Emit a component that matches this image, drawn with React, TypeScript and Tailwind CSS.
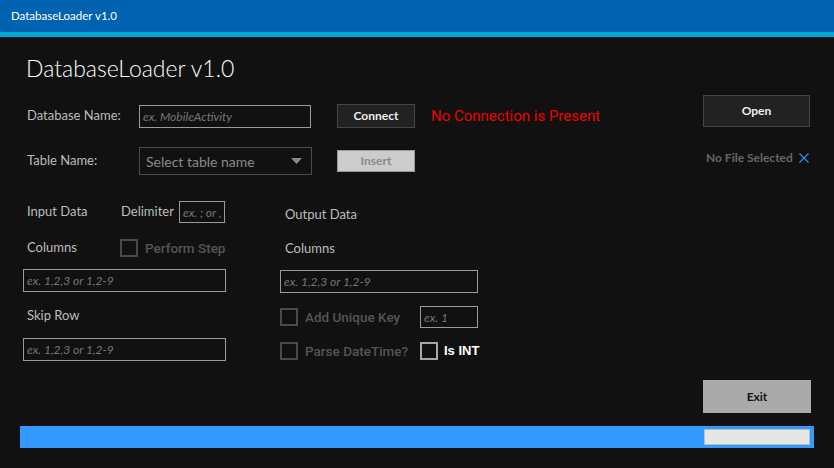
import React from 'react';

// ── Small building blocks ──────────────────────────────────────────────────────

function Box({ light }: { light?: boolean }) {
  return (
    <span
      className={
        light
          ? 'block w-[18px] h-[18px] border-2 border-[#a8a8a8] shrink-0'
          : 'block w-[18px] h-[18px] border-2 border-[#4a4a4a] shrink-0'
      }
    />
  );
}

function Field({ placeholder, className }: { placeholder: string; className: string }) {
  return (
    <input
      readOnly
      placeholder={placeholder}
      className={
        'bg-transparent border border-[#9a9a9a] px-[3px] text-[12px] italic text-[#ddd] outline-none placeholder:text-[#767676] font-[Lato,sans-serif] ' +
        className
      }
    />
  );
}

const label = 'text-[13px] text-[#bdbdbd]';
const check = "text-[13.5px] font-medium text-[#555555] font-['Roboto',sans-serif]";

export default function App() {
  return (
    <div className="w-[834px] h-[468px] bg-[#111111] flex flex-col overflow-hidden font-[Lato,sans-serif]">
      {/* window title */}
      <div className="h-[32px] bg-[#0063b1] flex items-center pl-[11px] text-white text-[11.5px]">
        DatabaseLoader v1.0
      </div>
      <div className="h-[5px] bg-[#00a9d6]" />

      <div className="flex-1 flex flex-col">
        <div className="flex flex-1">
          {/* ── main form ── */}
          <div className="flex-1 flex flex-col">
            <h1 className="ml-[26px] mt-[15px] h-[32px] leading-[32px] text-[23px] font-light text-white">
              DatabaseLoader v1.0
            </h1>

            {/* database row */}
            <div className="flex items-center mt-[20px] h-[24px]">
              <span className={'ml-[27px] w-[112px] ' + label}>Database Name:</span>
              <Field placeholder="ex. MobileActivity" className="w-[172px] h-[23px]" />
              <button className="ml-[26px] w-[78px] h-[24px] bg-[#222222] border border-[#444444] text-[12px] font-bold text-[#eeeeee]">
                Connect
              </button>
              <span className="ml-[16px] text-[15px] text-[#f00000] font-['Roboto',sans-serif]">
                No Connection is Present
              </span>
            </div>

            {/* table row */}
            <div className="flex items-center mt-[19px] h-[28px]">
              <span className={'ml-[27px] w-[112px] ' + label}>Table Name:</span>
              <div className="w-[173px] h-[28px] border border-[#4a4a4a] flex items-center justify-between pl-[6px] pr-[9px]">
                <span className="text-[14px] text-[#8a8a8a]">Select table name</span>
                <svg width="11" height="6" viewBox="0 0 11 6">
                  <path d="M0 0H11L5.5 6Z" fill="#8a8a8a" />
                </svg>
              </div>
              <button className="ml-[25px] w-[78px] h-[22px] bg-[#cccccc] border border-[#9a9a9a] text-[12px] font-bold text-[#8a8a8a]">
                Insert
              </button>
            </div>

            {/* input / output */}
            <div className="flex mt-[26px]">
              <div className="w-[280px] pl-[23px] flex flex-col">
                <div className="flex items-center h-[22px]">
                  <span className={'ml-[4px] w-[94px] ' + label}>Input Data</span>
                  <span className={'w-[58px] ' + label}>Delimiter</span>
                  <Field placeholder="ex. ; or ," className="w-[46px] h-[22px]" />
                </div>
                <div className="flex items-center h-[18px] mt-[16px]">
                  <span className={'ml-[4px] w-[93px] ' + label}>Columns</span>
                  <Box />
                  <span className={'ml-[7px] ' + check}>Perform Step</span>
                </div>
                <Field placeholder="ex. 1,2,3 or 1,2-9" className="mt-[12px] w-[203px] h-[23px]" />
                <div className="flex items-center h-[18px] mt-[15px]">
                  <span className={'ml-[4px] ' + label}>Skip Row</span>
                </div>
                <Field placeholder="ex. 1,2,3 or 1,2-9" className="mt-[13px] w-[203px] h-[23px]" />
              </div>

              <div className="flex flex-col">
                <div className="flex items-center h-[22px] mt-[3px]">
                  <span className={'ml-[5px] ' + label}>Output Data</span>
                </div>
                <div className="flex items-center h-[18px] mt-[14px]">
                  <span className={'ml-[5px] ' + label}>Columns</span>
                </div>
                <Field placeholder="ex. 1,2,3 or 1,2-9" className="mt-[12px] w-[198px] h-[23px]" />
                <div className="flex items-center h-[22px] mt-[13px]">
                  <div className="w-[140px] flex items-center">
                    <Box />
                    <span className={'ml-[7px] ' + check}>Add Unique Key</span>
                  </div>
                  <Field placeholder="ex. 1" className="w-[58px] h-[22px]" />
                </div>
                <div className="flex items-center h-[18px] mt-[14px]">
                  <div className="w-[140px] flex items-center">
                    <Box />
                    <span className={'ml-[7px] ' + check}>Parse DateTime?</span>
                  </div>
                  <Box light />
                  <span className="ml-[6px] text-[13px] font-bold text-white font-['Liberation_Sans',sans-serif]">
                    Is INT
                  </span>
                </div>
              </div>
            </div>
          </div>

          {/* ── right column ── */}
          <div className="w-[108px] mr-[23px] flex flex-col">
            <button className="mt-[58px] w-[107px] h-[32px] bg-[#222222] border border-[#444444] text-[12px] font-bold text-[#eeeeee]">
              Open
            </button>
            <div className="mt-[23px] h-[16px] flex items-center pl-[3px] gap-[6px]">
              <span className="text-[12px] font-bold text-[#666666]">No File Selected</span>
              <svg width="10" height="10" viewBox="0 0 10 10">
                <path d="M0.5 0.5L9.5 9.5M9.5 0.5L0.5 9.5" stroke="#2b8ff0" strokeWidth="1.2" />
              </svg>
            </div>
            <button className="mt-auto w-[108px] h-[33px] bg-[#aaaaaa] text-[12px] font-bold text-[#111111]">
              Exit
            </button>
          </div>
        </div>

        {/* progress */}
        <div className="mx-[20px] mt-[13px] mb-[20px] h-[22px] bg-[#3399ff] flex items-center justify-end pr-[4px]">
          <div className="w-[106px] h-[16px] bg-[#e6e6e6] border border-[#bdbdbd]" />
        </div>
      </div>
    </div>
  );
}
